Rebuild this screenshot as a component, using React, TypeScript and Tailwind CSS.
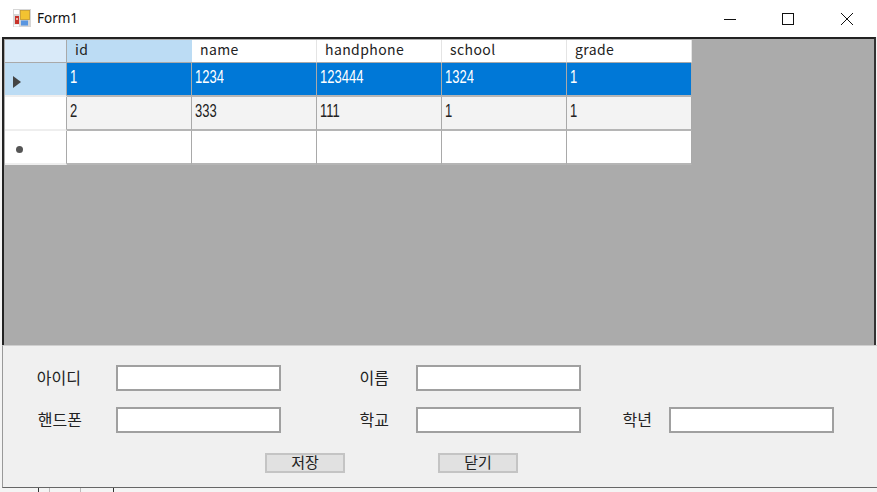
const font = { fontFamily: '"Noto Sans CJK KR", sans-serif' };

const columns = ["id", "name", "handphone", "school", "grade"];
const rows = [
  ["1", "1234", "123444", "1324", "1"],
  ["2", "333", "111", "1", "1"],
  ["", "", "", "", ""],
];

function Field({ label, pr, empty }: { label: string; pr: string; empty?: boolean }) {
  return (
    <>
      <div className={`flex items-center justify-end pb-[3px] text-[16px] text-[#222] ${pr}`}>{label}</div>
      {empty ? <div /> : <div className="h-[26px] border-2 border-[#a0a0a0] bg-white" />}
    </>
  );
}

function AppIcon() {
  return (
    <svg width="18" height="18" viewBox="0 0 18 18" className="mb-[2px] shrink-0">
      <rect x="0" y="0" width="18" height="18" fill="#d6d6d6" />
      <rect x="1" y="1" width="5" height="4" fill="#fff" />
      <rect x="2" y="7" width="4" height="8" fill="#c8322a" />
      <rect x="3" y="9" width="2" height="2" fill="#eeb0a0" />
      <rect x="7.4" y="1.4" width="9.2" height="9.2" fill="#f3c331" stroke="#c89a2a" strokeWidth="0.8" />
      <rect x="8" y="11.5" width="7" height="5" fill="#5a96e0" />
      <rect x="1" y="15.5" width="5" height="2" fill="#fff" />
    </svg>
  );
}

export default function App() {
  return (
    <div className="flex h-[492px] w-[877px] flex-col overflow-hidden bg-[#f4f4f4]" style={font}>
      <div className="flex h-[37px] shrink-0 items-center bg-white pl-[13px]">
        <AppIcon />
        <span className="ml-[6px] text-[13.5px] text-[#111]" style={{ fontFamily: '"Noto Sans", sans-serif' }}>Form1</span>
        <div className="ml-auto flex items-center pr-[23px] text-black">
          <svg width="14" height="14" viewBox="0 0 14 14" className="mr-[44px]"><path d="M1 7.5H13" stroke="#111" fill="none" /></svg>
          <svg width="14" height="14" viewBox="0 0 14 14" className="mr-[45px]"><rect x="1.5" y="1.5" width="11" height="11" stroke="#111" fill="none" /></svg>
          <svg width="14" height="14" viewBox="0 0 14 14"><path d="M1 1L13 13M13 1L1 13" stroke="#111" fill="none" /></svg>
        </div>
      </div>

      <div className="ml-[2px] mr-[1px] flex h-[308px] shrink-0 border-l-2 border-r-2 border-t-2 border-l-[#222] border-r-[#333] border-t-[#222] bg-[#ababab] pl-[1px] pt-[1px]">
        <div className="grid h-[125px] grid-cols-[62px_125px_125px_125px_125px_125px] grid-rows-[23px_34px_34px_34px]">
          <div className="border-r border-b border-[#a9a9a9] bg-[#d9eaf9]" />
          {columns.map((c, i) => (
            <div key={c} className={`flex items-center border-b border-[#a9a9a9] pb-[3px] pl-[8px] text-[14px] text-[#222] ${i === 0 ? "bg-[#bcdcf4]" : "bg-white border-r border-r-[#e4e4e4]"}`}>
              <span className="tracking-[0.4px]">{c}</span>
            </div>
          ))}
          {rows.map((r, ri) => (
            <div key={ri} className="contents">
              <div className={`flex items-center border-r border-b-2 border-r-[#a9a9a9] border-b-[#eeeeee] pl-[7px] ${ri === 0 ? "bg-[#bcdcf4]" : "bg-white"}`}>
                {ri === 0 && (
                  <svg width="8" height="12" viewBox="0 0 8 12" className="mt-[5px] ml-[1px]"><path d="M0 0L8 6L0 12Z" fill="#444" /></svg>
                )}
                {ri === 2 && <span className="ml-[4px] mt-[5px] h-[7px] w-[7px] rounded-full bg-[#555]" />}
              </div>
              {r.map((v, ci) => (
                <div
                  key={ci}
                  className={`flex items-center border-r border-b-2 border-r-[#a9a9a9] border-b-[#b5b5b5] pb-[2px] pl-[3px] text-[13px] ${
                    ri === 0 ? "bg-[#0078d7] text-white" : ri === 1 ? "bg-[#f3f3f3] text-[#222]" : "bg-white"
                  }`}
                  style={{ fontFamily: '"Liberation Sans", sans-serif' }}
                >
                  <span className="inline-block scale-y-[1.35]">{v}</span>
                </div>
              ))}
            </div>
          ))}
        </div>
      </div>

      <div className="ml-[2px] h-[143px] shrink-0 border-b border-l border-t border-b-[#666] border-l-[#999] border-t-[#cfcfcf] bg-[#f0f0f0] pl-[33px] pt-[19px]">
        <div className="grid grid-cols-[80px_165px_135px_165px_88px_165px] grid-rows-[26px_26px] gap-y-[16px]">
          <Field label="아이디" pr="pr-[35px]" />
          <Field label="이름" pr="pr-[27px]" />
          <Field label="" pr="" empty />
          <Field label="핸드폰" pr="pr-[34px]" />
          <Field label="학교" pr="pr-[27px]" />
          <Field label="학년" pr="pr-[17px]" />
        </div>
        <div className="ml-[229px] mt-[20px] flex gap-[93px] text-[15px] text-[#222]">
          <button className="flex h-[20px] w-[80px] items-center justify-center border-2 border-[#c4c4c4] bg-[#e1e1e1] pb-[1px]">저장</button>
          <button className="flex h-[20px] w-[80px] items-center justify-center border-2 border-[#c4c4c4] bg-[#e1e1e1] pb-[1px]">닫기</button>
        </div>
      </div>

      <div className="ml-[38px] flex h-[4px] w-[76px] border-l border-r border-[#333]">
        <div className="ml-[10px] w-[32px] border-l border-r border-[#bbb]" />
      </div>
    </div>
  );
}
